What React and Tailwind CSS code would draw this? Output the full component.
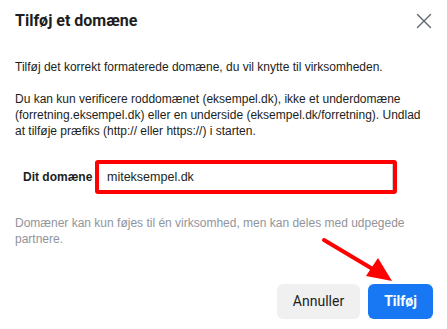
import { X } from 'lucide-react';

export default function App() {
  return (
    <div className="relative w-[447px] h-[329px] overflow-hidden bg-white font-['Liberation_Sans',Arial,sans-serif] text-[#1c1e21]">
      <div className="flex items-center justify-between h-[40px] pl-[15px] pr-[10px] pt-[1px]">
        <h1 className="font-['Roboto',sans-serif] font-bold text-[16px] leading-none">Tilføj et domæne</h1>
        <X size={26} strokeWidth={1.3} className="text-[#606770]" />
      </div>

      <div className="px-[15px] pt-[19px] text-[12px] leading-[16px]">
        <p>Tilføj det korrekt formaterede domæne, du vil knytte til virksomheden.</p>
        <p className="mt-[16px]">
          Du kan kun verificere roddomænet (eksempel.dk), ikke et underdomæne (forretning.eksempel.dk) eller en underside (eksempel.dk/forretning). Undlad at tilføje præfiks (http:// eller https://) i starten.
        </p>

        <div className="flex items-center mt-[21px] pl-[8px]">
          <label className="font-bold text-[12px] w-[72px]">Dit domæne</label>
          <div className="w-[302px] h-[34px] rounded-[3px] border-[4px] border-[#ff0000] bg-white flex items-center">
            <div className="flex-1 h-full border-r border-[#ccd0d5] flex items-center pl-[8px] text-[12.5px]">
              miteksempel.dk
            </div>
          </div>
        </div>

        <p className="mt-[21px] text-[#90949c]">
          Domæner kan kun føjes til én virksomhed, men kan deles med udpegede partnere.
        </p>
      </div>

      <div className="flex justify-end gap-[8px] pr-[14px] mt-[37px] font-['Roboto',sans-serif] text-[14px]">
        <button className="w-[83px] h-[35px] rounded-[6px] bg-[#f0f0f0] text-[#1c1e21]">Annuller</button>
        <button className="w-[65px] h-[35px] rounded-[6px] bg-[#1877f2] text-white font-bold">Tilføj</button>
      </div>

      <svg className="absolute left-0 top-0 pointer-events-none" width="447" height="329">
        <line x1="324" y1="240" x2="376" y2="271" stroke="#ff0000" strokeWidth="4" strokeLinecap="round" />
        <polygon points="392,281 366,276 378,258" fill="#ff0000" />
      </svg>
    </div>
  );
}
